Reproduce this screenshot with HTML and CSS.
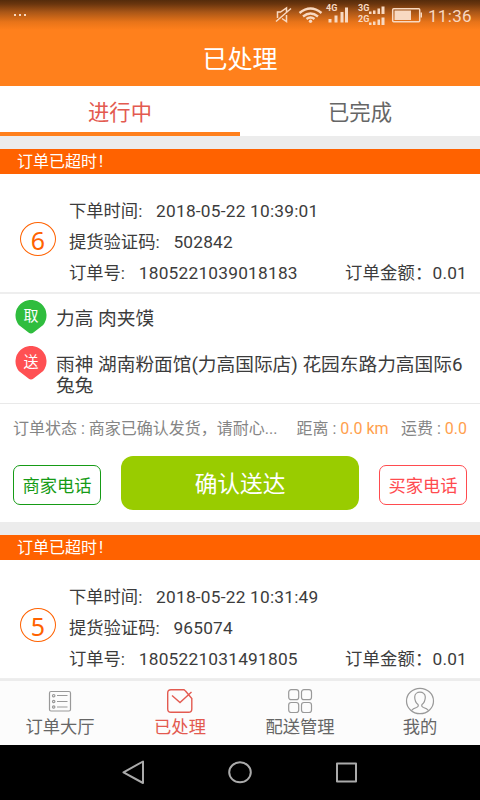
FILE: index.html
```html
<!DOCTYPE html>
<html lang="zh-CN">
<head>
<meta charset="utf-8">
<title>已处理</title>
<link rel="stylesheet" href="styles.css">
</head>
<body>
<div class="app">
  <header class="header">
    <div class="statusbar">
      <span class="dots"><i></i><i></i><i></i></span>
      <svg class="indicators" width="150" height="28" viewBox="0 0 150 28">
        <g fill="none" stroke="#f8d9c2" stroke-width="1.500">
          <path d="M2 21.500L17 8.500M3.500 18V12H6.500L12.500 8V12M12.500 15V21.500L8 18.500"/>
          <path stroke-width="2.400" d="M25.500 13Q36.500 4 47.500 13M29 16.500Q36.500 10.500 44 16.500M32.500 19Q36.500 16 40.500 19"/>
          <rect x="118.700" y="8.700" width="27" height="13" rx="1"/>
        </g>
        <g fill="#f8d9c2">
          <circle cx="36.500" cy="21.300" r="1.700"/>
          <path d="M54.500 19h3v3.500h-3zM60.500 15.500h3v7h-3zM66.500 12h3v10.500h-3zM71 7.500h3v15h-3z"/>
          <path d="M95 11.500h2.500v2.500H95zM99 10.500h2.500v3.500H99zM103.500 8.500h2.500V14h-2.500zM107.500 6.500h3V14h-3zM95 22.500h2.500V25H95zM99 21.500h2.500V25H99zM103.500 19.500h2.500V25h-2.500zM107.500 17.500h3V25h-3z"/>
          <path d="M120.500 10.500h16.500v9.500h-16.500zM146.500 12.500h1.500v5h-1.500z"/>
        </g>
        <g class="network"><text x="52" y="11">4G</text><text x="84" y="11">3G</text><text x="84" y="21.500">2G</text></g>
      </svg>
      <span class="clock">11:36</span>
    </div>
    <h1 class="title">已处理</h1>
  </header>

  <nav class="tabs">
    <div class="tab active">进行中</div>
    <div class="tab">已完成</div>
  </nav>

  <main class="orders">
    <article class="order">
      <div class="overdue">订单已超时<span class="mark">!</span></div>
      <section class="info">
        <div class="number">6</div>
        <div class="details">
          <div class="row"><span class="label">下单时间:</span><span>2018-05-22 10:39:01</span></div>
          <div class="row"><span class="label">提货验证码:</span><span>502842</span></div>
          <div class="row"><span class="label">订单号:</span><span>1805221039018183</span><span class="amount">订单金额：0.01</span></div>
        </div>
      </section>
      <section class="route">
        <div class="stop">
          <span class="pin"><svg width="32" height="34" viewBox="0 0 32 34"><path fill="#2fbd3e" d="M3.800 25A15.500 15.500 0 1 1 28.200 25L18.500 32.500Q16 34.500 13.500 32.500Z"/></svg><b>取</b></span>
          <div class="place">力高 肉夹馍</div>
        </div>
        <div class="stop">
          <span class="pin"><svg width="32" height="34" viewBox="0 0 32 34"><path fill="#ff5053" d="M3.800 25A15.500 15.500 0 1 1 28.200 25L18.500 32.500Q16 34.500 13.500 32.500Z"/></svg><b>送</b></span>
          <div class="place">雨神 湖南粉面馆(力高国际店) 花园东路力高国际6<br>兔兔</div>
        </div>
      </section>
      <section class="delivery">
        <div class="state"><span class="message">订单状态 : 商家已确认发货，请耐心...</span><span class="distance">距离 : <em>0.0 km</em></span><span>运费 : <em>0.0</em></span></div>
        <div class="actions">
          <button class="call seller">商家电话</button>
          <button class="confirm">确认送达</button>
          <button class="call buyer">买家电话</button>
        </div>
      </section>
    </article>
    <article class="order">
      <div class="overdue">订单已超时<span class="mark">!</span></div>
      <section class="info">
        <div class="number">5</div>
        <div class="details">
          <div class="row"><span class="label">下单时间:</span><span>2018-05-22 10:31:49</span></div>
          <div class="row"><span class="label">提货验证码:</span><span>965074</span></div>
          <div class="row"><span class="label">订单号:</span><span>1805221031491805</span><span class="amount">订单金额：0.01</span></div>
        </div>
      </section>
    </article>
  </main>

  <nav class="tabbar">
    <div class="item">
      <svg width="30" height="30" viewBox="0 0 30 30" fill="none" stroke="#999" stroke-width="1.200"><rect x="4.500" y="5.500" width="21" height="19.500" rx="1.500"/><path d="M12 9.500h10.500M12 15.500h10.500M12 21h10.500"/><circle cx="8.700" cy="9.700" r="1.200"/><circle cx="8.700" cy="15.500" r="1.200"/><circle cx="8.700" cy="21" r="1.200"/></svg>
      <span>订单大厅</span>
    </div>
    <div class="item current">
      <svg width="30" height="30" viewBox="0 0 30 30" fill="none" stroke="#e35a50" stroke-width="1.400"><path d="M20.500 5L19 3.700H6Q2.700 3.700 2.700 7V23Q2.700 26.300 6 26.300H23.500Q26.800 26.300 26.800 23V12.500L20.500 5M7 9.500L15 16.500L26.500 6"/></svg>
      <span>已处理</span>
    </div>
    <div class="item">
      <svg width="30" height="30" viewBox="0 0 30 30" fill="none" stroke="#999" stroke-width="1.200"><rect x="3.700" y="3.700" width="10" height="10" rx="2.500"/><rect x="16.500" y="3.700" width="10" height="10" rx="2.500"/><rect x="3.700" y="16.500" width="10" height="10" rx="2.500"/><rect x="16.500" y="16.500" width="10" height="10" rx="2.500"/></svg>
      <span>配送管理</span>
    </div>
    <div class="item">
      <svg width="30" height="30" viewBox="0 0 30 30" fill="none" stroke="#999" stroke-width="1.200"><ellipse cx="15" cy="15" rx="13.500" ry="12.700"/><path d="M6.500 24.500Q8 22.500 11.500 21.500Q14 20.500 13 18.500C11 17 9.700 14.500 9.700 11C9.700 4.500 20.300 4.500 20.300 11C20.300 14.500 19 17 17 18.500Q16 20.500 18.500 21.500Q22 22.500 23.500 24.500"/></svg>
      <span>我的</span>
    </div>
  </nav>

  <footer class="system">
    <svg width="240" height="30" viewBox="0 0 240 30" fill="none" stroke="#aaa" stroke-width="2" stroke-linejoin="round"><path d="M3.500 15.300L23 4.500V26Z"/><ellipse cx="120" cy="15.300" rx="10.800" ry="10"/><path d="M217 6.500h19v18h-19z"/></svg>
  </footer>
</div>
</body>
</html>
```
FILE: styles.css
```css
* { box-sizing: border-box; }
body {
  margin: 0;
  font-family: Roboto, "Noto Sans CJK SC", sans-serif;
  color: #3c3c3c;
  background: #ececec;
}
.app {
  width: 480px;
  height: 800px;
  overflow: hidden;
  display: flex;
  flex-direction: column;
}
.header {
  height: 86px;
  flex: none;
  color: #fff;
  background: linear-gradient(#552b0b 0, #6a350e 4px, #a95617 12px, #e87419 22px, #ff801c 30px);
}
.statusbar {
  height: 30px;
  display: flex;
  padding-left: 14px;
}
.dots { display: flex; gap: 3px; padding-top: 14px; width: 260px; }
.dots i { width: 2px; height: 2px; background: #f8d9c2; }
.indicators { flex: none; }
.network { fill: #f8d9c2; font: bold 9px Roboto, sans-serif; }
.clock { color: #f8d9c2; font-size: 17px; line-height: 32px; padding-left: 4px; letter-spacing: .3px; }
.title {
  margin: 0;
  font-size: 25px;
  font-weight: 400;
  line-height: 60px;
  text-align: center;
}
.tabs { display: flex; flex: none; height: 50px; background: #fff; }
.tab {
  flex: 1;
  text-align: center;
  font-size: 21.300px;
  line-height: 53px;
  color: #666;
}
.tab.active { color: #e35a50; border-bottom: 4px solid #ff801c; }
.orders { display: flow-root; flex: none; height: 543px; overflow: hidden; }
.order { margin-top: 13px; background: #fff; }
.overdue {
  height: 25px;
  padding-left: 17px;
  background: #ff6200;
  color: #fff;
  font-size: 16px;
  line-height: 25px;
}
.mark { margin-left: 2px; }
.info {
  display: flex;
  height: 120px;
  padding: 22px 13px 0 20px;
  border-bottom: 2px solid #eee;
  font-size: 17.300px;
}
.number {
  width: 36px;
  height: 34px;
  margin: 26px 13px 0 0;
  border: 1.500px solid #ff6200;
  border-radius: 50%;
  color: #ff6200;
  font-family: "Noto Sans", sans-serif;
  font-size: 25px;
  line-height: 34px;
  text-align: center;
}
.details { flex: 1; }
.row { display: flex; height: 31px; line-height: 31px; white-space: pre; letter-spacing: .22px; }
.label { letter-spacing: 0; margin-right: 13.800px; }
.amount { margin-left: auto; letter-spacing: .2px; }
.route {
  height: 110px;
  padding: 6px 0 0 15px;
  border-bottom: 1px solid #e9e9e9;
  font-size: 18.700px;
  line-height: 21px;
}
.stop { display: flex; height: 46px; }
.pin { position: relative; width: 32px; flex: none; }
.pin b {
  position: absolute;
  left: 0;
  top: 0;
  width: 32px;
  line-height: 32px;
  text-align: center;
  color: #fff;
  font-size: 15px;
  font-weight: 400;
}
.place { padding: 9px 0 0 9px; white-space: nowrap; }
.delivery { height: 118px; }
.state {
  display: flex;
  height: 48px;
  padding: 0 13px;
  font-size: 16px;
  line-height: 50px;
  color: #858585;
  white-space: nowrap;
}
.state em { font-style: normal; color: #ffa04d; }
.message { width: 283.500px; }
.distance { width: 104.500px; }
.actions { display: flex; align-items: center; justify-content: space-between; padding: 4px 13px 0; }
.actions button { padding: 0 0 1px; background: none; font-family: inherit; }
.actions .call {
  width: 88px;
  height: 40px;
  margin-top: 4px;
  border: 1.500px solid;
  border-radius: 7px;
  font-size: 17.300px;
}
.actions .seller { color: #169b16; }
.actions .buyer { color: #ff4b4f; }
.actions .confirm {
  width: 238px;
  height: 54px;
  border: 0;
  border-radius: 12px;
  background: #99cc00;
  color: #fff;
  font-size: 22.700px;
}
.tabbar {
  display: flex;
  flex: none;
  height: 66px;
  padding-top: 5px;
  border-top: 2px solid #ececec;
  background: #fcfcfc;
}
.item {
  flex: 1;
  display: flex;
  flex-direction: column;
  align-items: center;
  font-size: 17.300px;
  line-height: 23px;
  color: #666;
}
.item.current { color: #e35a50; }
.system { height: 55px; flex: none; background: #000; text-align: center; padding-top: 12px; }
```
